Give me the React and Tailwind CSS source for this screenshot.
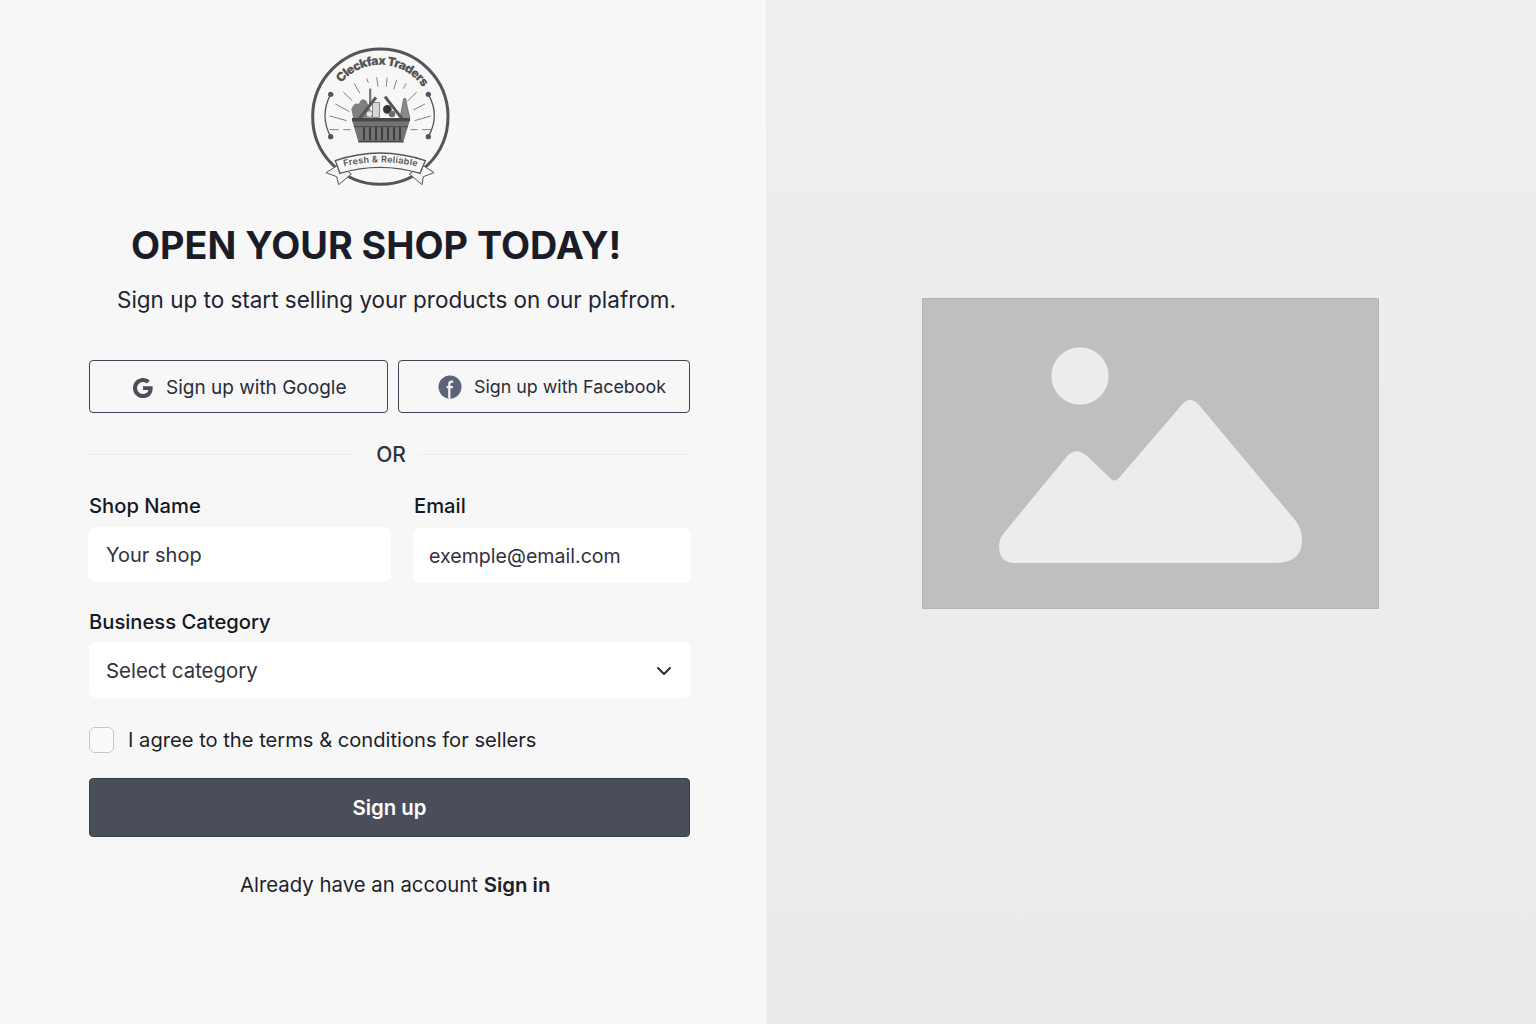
import React from 'react'
import { ChevronDown } from 'lucide-react'

const rays = [
    [230, 145, 235, 158], [260, 142, 264, 170], [291, 143, 289, 170], [320, 150, 311, 178], [349, 160, 340, 176],
    [192, 160, 210, 190], [160, 186, 187, 212], [136, 222, 178, 245], [120, 258, 170, 272],
    [380, 186, 352, 214], [405, 222, 370, 240], [422, 258, 374, 272],
    [118, 299, 146, 299], [160, 299, 182, 299], [362, 299, 382, 299], [396, 299, 424, 299],
]

function Logo() {
    const stroke = '#555558'
    return (
        <svg width="180" height="170" viewBox="0 0 540 510" fill="none">
            <defs>
                <path id="logoTopArc" d="M 128 200 A 155 155 0 0 1 414 200" />
                <path id="logoRibbonArc" d="M 152 412 Q 270 382 392 412" />
            </defs>
            <circle cx="271" cy="260" r="203" stroke={stroke} strokeWidth="9" />
            <text fontFamily="Inter, sans-serif" fontWeight="900" fontSize="37" fill={stroke} letterSpacing="-2.2">
                <textPath href="#logoTopArc" startOffset="52%" textAnchor="middle">Cleckfax Traders</textPath>
            </text>

            <path d="M 122 193 Q 88 256 122 320" stroke={stroke} strokeWidth="4" />
            <path d="M 415 193 Q 451 256 415 320" stroke={stroke} strokeWidth="4" />
            <circle cx="122" cy="193" r="8" fill={stroke} />
            <circle cx="122" cy="320" r="8" fill={stroke} />
            <circle cx="415" cy="193" r="8" fill={stroke} />
            <circle cx="415" cy="320" r="8" fill={stroke} />

            {rays.map((r, i) => (
                <line key={i} x1={r[0]} y1={r[1]} x2={r[2]} y2={r[3]} stroke="#6a6a6d" strokeWidth="2.5" />
            ))}

            <path d="M 184 238 Q 192 216 206 222 Q 216 198 230 214 L 250 262 L 190 266 Z" fill="#808083" />
            <rect x="237" y="176" width="7" height="50" fill="#77777a" />
            <rect x="248" y="218" width="20" height="44" fill="#d6d6d6" stroke={stroke} strokeWidth="2" />
            <circle cx="238" cy="252" r="10" fill="#e6e6e6" stroke={stroke} strokeWidth="2" />
            <circle cx="292" cy="238" r="13" fill="#333336" />
            <circle cx="306" cy="252" r="10" fill="#6c6c6f" />
            <path d="M 336 232 L 341 206 L 347 206 L 352 232 L 360 266 H 330 Z" fill="#8a8a8d" stroke={stroke} strokeWidth="2" />
            <line x1="208" y1="266" x2="258" y2="202" stroke={stroke} strokeWidth="9" />
            <line x1="285" y1="200" x2="336" y2="266" stroke={stroke} strokeWidth="9" />
            <path d="M 186 270 H 360 L 340 335 H 205 Z" fill="#737376" />
            <rect x="186" y="264" width="174" height="10" fill="#47474a" />
            <line x1="192" y1="290" x2="354" y2="290" stroke="#47474a" strokeWidth="3" />
            {[222, 240, 258, 276, 294, 312, 330].map((x) => (
                <line key={x} x1={x} y1="292" x2={x} y2="330" stroke="#333336" strokeWidth="5" />
            ))}
            <path d="M 205 335 H 340" stroke="#47474a" strokeWidth="5" />

            <path d="M 145 405 L 108 428 L 140 440 L 146 464 L 184 432 Z" fill="#f7f7f8" stroke={stroke} strokeWidth="3" />
            <path d="M 397 405 L 432 428 L 400 440 L 396 464 L 358 432 Z" fill="#f7f7f8" stroke={stroke} strokeWidth="3" />
            <path d="M 136 392 Q 270 346 406 392 L 390 430 Q 270 394 150 430 Z" fill="#f7f7f8" stroke={stroke} strokeWidth="4" />
            <text fontFamily="Inter, sans-serif" fontWeight="600" fontSize="27" fill={stroke} letterSpacing="0.9">
                <textPath href="#logoRibbonArc" startOffset="50%" textAnchor="middle">Fresh &amp; Reliable</textPath>
            </text>
        </svg>
    )
}

function GoogleIcon() {
    return (
        <svg width="22" height="22" viewBox="0 0 24 24" fill="#4a4e5a">
            <path d="M22.56 12.25c0-.78-.07-1.53-.2-2.25H12v4.26h5.92c-.26 1.37-1.04 2.53-2.21 3.31v2.77h3.57c2.08-1.92 3.28-4.74 3.28-8.09z" />
            <path d="M12 23c2.97 0 5.46-.98 7.28-2.66l-3.57-2.77c-.98.66-2.23 1.06-3.71 1.06-2.86 0-5.29-1.93-6.16-4.53H2.18v2.84C3.99 20.53 7.7 23 12 23z" />
            <path d="M5.84 14.09c-.22-.66-.35-1.36-.35-2.09s.13-1.43.35-2.09V7.07H2.18C1.43 8.55 1 10.22 1 12s.43 3.45 1.18 4.93l3.66-2.84z" />
            <path d="M12 5.38c1.62 0 3.06.56 4.21 1.64l3.15-3.15C17.45 2.09 14.97 1 12 1 7.7 1 3.99 3.47 2.18 7.07l3.66 2.84c.87-2.6 3.3-4.53 6.16-4.53z" />
        </svg>
    )
}

function FacebookIcon() {
    return (
        <svg width="24" height="24" viewBox="0 0 24 24">
            <circle cx="12" cy="12" r="11.5" fill="#5a6378" />
            <path d="M12.4 23.4V13.2h2.4l.3-2.2h-2.7V9.3c0-.9.3-1.5 1.5-1.5h1.3V5.7c-.3 0-1-.1-1.8-.1-2 0-3.2 1.2-3.2 3.4V11H8.6v2.2h1.6v10.2z" fill="#f7f7f8" />
        </svg>
    )
}

export default function App() {
    return (
        <div className="flex min-h-[1024px] font-['Inter',sans-serif]">
            <div className="w-[767px] h-[1024px] bg-[#f7f7f8] pl-[89px] border-r border-[#eeeeee]">
                <div className="ml-[201px] pt-[30px] h-[200px]">
                    <Logo />
                </div>

                <h1 className="ml-[42px] mt-[22px] text-[37.75px] leading-[46px] font-bold text-[#1a1c28] whitespace-nowrap">OPEN YOUR SHOP TODAY!</h1>
                <p className="ml-[28px] mt-[18px] text-[22.46px] leading-[28px] text-[#22242e] whitespace-nowrap">Sign up to start selling your products on our plafrom.</p>

                <div className="w-[601px] mt-[46px]">
                    <div className="flex gap-[10px]">
                        <button className="w-[299px] h-[53px] flex items-center pl-[42px] pt-[3px] gap-[12px] rounded border border-[#3f4354] text-[19px] text-[#2a2c38] whitespace-nowrap">
                            <GoogleIcon />
                            Sign up with Google
                        </button>
                        <button className="w-[292px] h-[53px] flex items-center pl-[39px] pt-[1px] gap-[12px] rounded border border-[#3f4354] text-[17.85px] text-[#2a2c38] whitespace-nowrap">
                            <FacebookIcon />
                            Sign up with Facebook
                        </button>
                    </div>

                    <div className="flex items-center mt-[28px] h-[28px]">
                        <div className="w-[266px] h-px mb-[2px] bg-[#ebebec]" />
                        <span className="w-[65px] pl-[7px] text-center text-[21px] font-medium text-[#30323e]">OR</span>
                        <div className="w-[269px] h-px mb-[2px] bg-[#ebebec]" />
                    </div>

                    <div className="flex mt-[23px]">
                        <div className="w-[325px] shrink-0">
                            <label className="block text-[20.2px] leading-[28px] font-medium text-[#15171f]">Shop Name</label>
                            <input
                                placeholder="Your shop"
                                className="block mt-[7px] ml-[-1px] w-[303px] h-[55px] rounded-lg bg-white px-[18px] text-[20px] placeholder:text-[#30323e] outline-none"
                            />
                        </div>
                        <div className="shrink-0">
                            <label className="block text-[20.2px] leading-[28px] font-medium text-[#15171f]">Email</label>
                            <input
                                placeholder="exemple@email.com"
                                className="block mt-[8px] ml-[-1px] w-[278px] h-[55px] rounded-lg bg-white px-[16px] text-[19.6px] placeholder:text-[#30323e] outline-none"
                            />
                        </div>
                    </div>

                    <label className="block mt-[25px] text-[20.2px] leading-[28px] font-medium text-[#15171f]">Business Category</label>
                    <div className="flex items-center justify-between mt-[6px] w-[602px] h-[56px] pt-[2px] rounded-lg bg-white pl-[17px] pr-[15px] text-[20.4px] text-[#30323e]">
                        <span>Select category</span>
                        <ChevronDown size={24} strokeWidth={2} className="text-[#2a2c3e]" />
                    </div>

                    <div className="flex items-center mt-[29px] gap-[14px]">
                        <span className="w-[25px] h-[26px] rounded-md border border-[#c5c6d0] bg-[#fafafb]" />
                        <span className="text-[20.15px] leading-[26px] text-[#1d1f29]">I agree to the terms &amp; conditions for sellers</span>
                    </div>

                    <button className="block mt-[25px] w-[601px] h-[59px] pt-[1px] rounded bg-[#4a4e5a] border border-[#3b3f4b] text-[20.4px] font-semibold text-white">Sign up</button>

                    <p className="mt-[34px] ml-[151px] text-[20.35px] leading-[28px] text-[#1d1f29] whitespace-nowrap">
                        Already have an account <span className="font-semibold">Sign in</span>
                    </p>
                </div>
            </div>

            <div className="flex-1 h-[1024px] bg-gradient-to-b from-[#eeeeee] to-[#ebebeb] pl-[155px] pt-[298px]">
                <div className="w-[457px] h-[311px] bg-[#bfbfbf] border border-[#b4b4b4]">
                    <svg width="455" height="309" viewBox="1 1 455 309">
                        <circle cx="158" cy="78" r="28.7" fill="#ececec" />
                        <path
                            d="M144.7 158.7 Q153.7 148 165 158 L188 180 Q192.3 185 197 180 L259.7 107 Q268 97 277 107 L373 222 Q380 231 380 242 Q380 265 353 265 H93 Q77 265 77 248 Q77 240 83 233.7 Z"
                            fill="#ececec"
                        />
                    </svg>
                </div>
            </div>
        </div>
    )
}
